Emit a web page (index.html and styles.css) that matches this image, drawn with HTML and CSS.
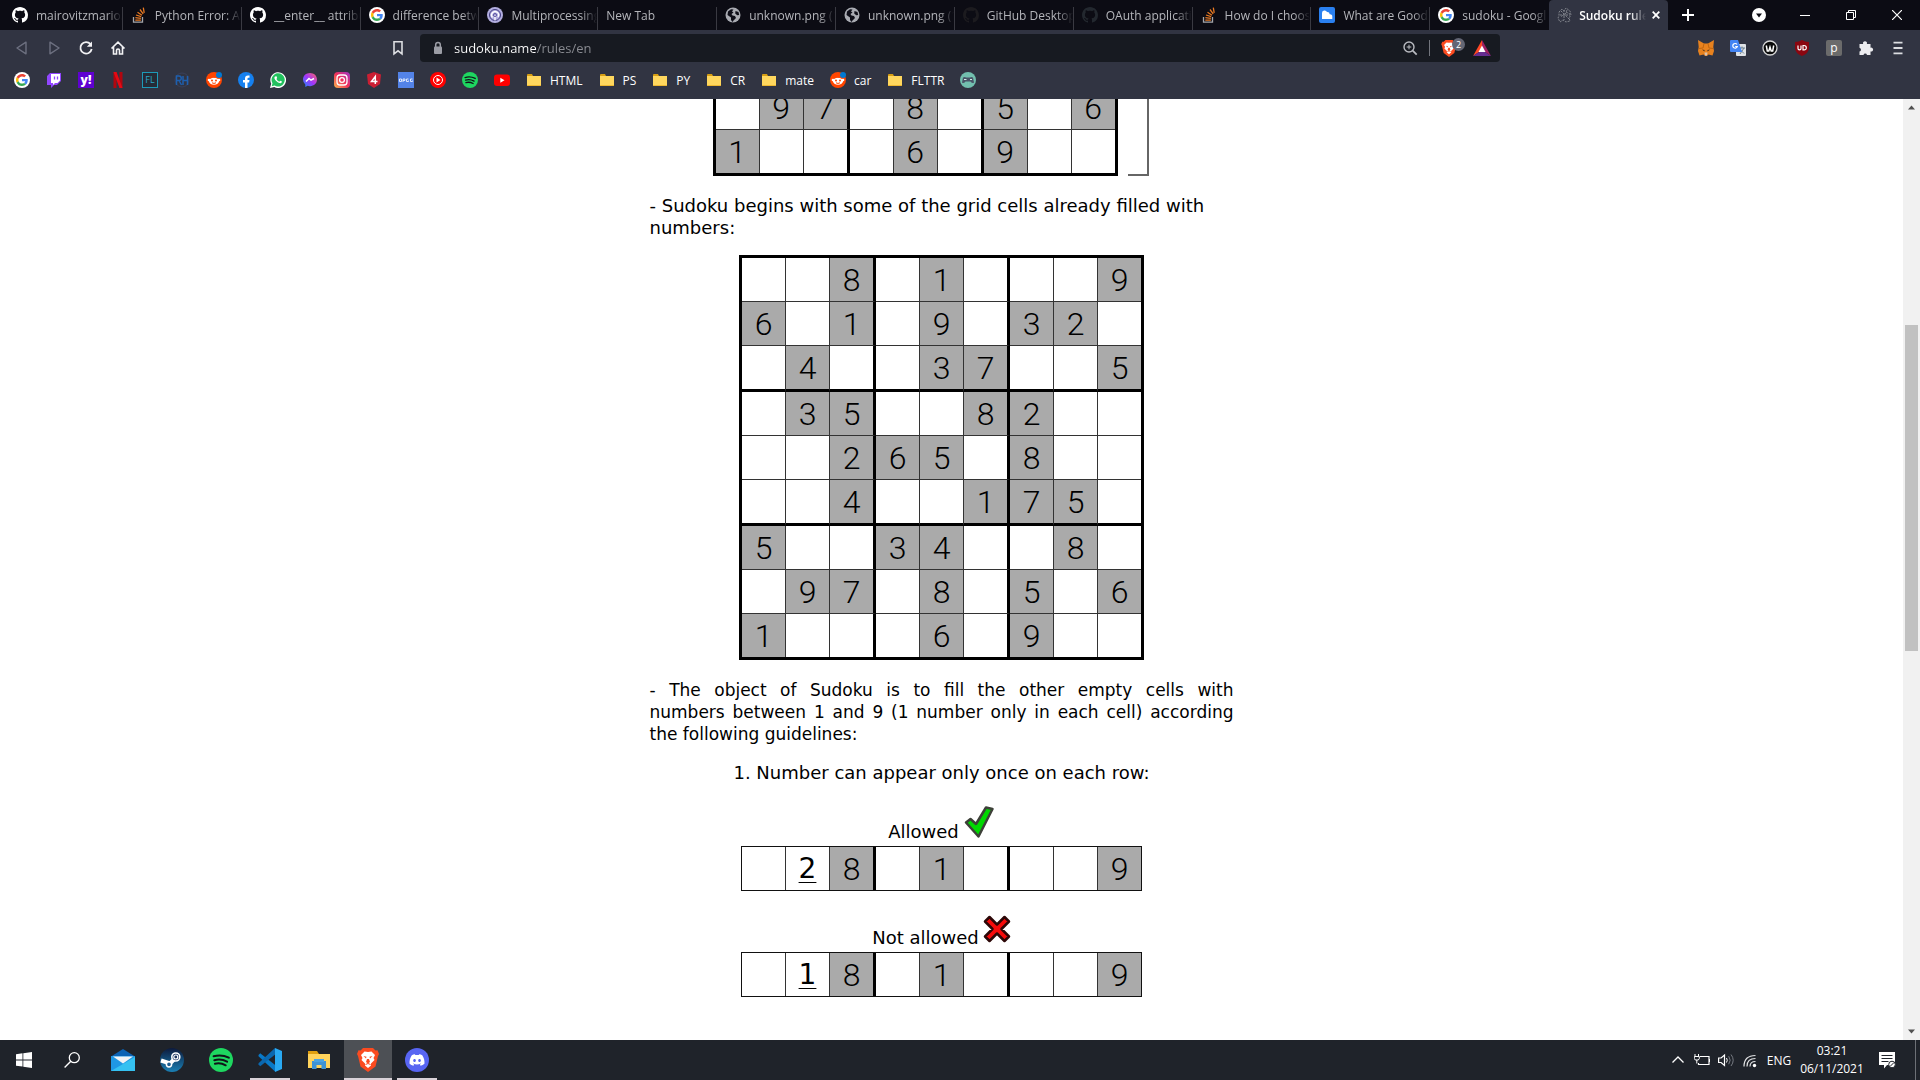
FILE: index.html
```html
<!DOCTYPE html>
<html lang="en">
<head>
<meta charset="utf-8">
<title>Sudoku rules</title>
<link rel="stylesheet" href="styles.css">
</head>
<body>
<svg class="defs" aria-hidden="true">
  <symbol id="github" viewBox="0 0 16 16"><path fill="currentColor" d="M8 0C3.58 0 0 3.58 0 8c0 3.54 2.29 6.53 5.47 7.59.4.07.55-.17.55-.38 0-.19-.01-.82-.01-1.49-2.01.37-2.53-.49-2.69-.94-.09-.23-.48-.94-.82-1.13-.28-.15-.68-.52-.01-.53.63-.01 1.08.58 1.23.82.72 1.21 1.87.87 2.33.66.07-.52.28-.87.51-1.07-1.78-.2-3.64-.89-3.64-3.95 0-.87.31-1.59.82-2.15-.08-.2-.36-1.02.08-2.12 0 0 .67-.21 2.2.82.64-.18 1.32-.27 2-.27.68 0 1.36.09 2 .27 1.53-1.04 2.2-.82 2.2-.82.44 1.1.16 1.92.08 2.12.51.56.82 1.27.82 2.15 0 3.07-1.87 3.75-3.65 3.95.29.25.54.73.54 1.48 0 1.07-.01 1.93-.01 2.2 0 .21.15.46.55.38A8.013 8.013 0 0016 8c0-4.42-3.58-8-8-8z"/></symbol>
  <symbol id="overflow" viewBox="0 0 16 16"><path d="M2.5 10v5.2h9V10" fill="none" stroke="#a5a7ab" stroke-width="1.3"/><path d="M4.3 13.2h5.6M4.4 10.7l5.5.6M5 8l5.200 1.600M6.500 5.200l4.500 3M9 2.500l3.200 4.300M12.300.6l.9 5.200" stroke="#e87922" stroke-width="1.3"/></symbol>
  <symbol id="google" viewBox="0 0 16 16"><circle cx="8" cy="8" r="8" fill="#fff"/><g transform="translate(2 2) scale(.25)"><path fill="#EA4335" d="M24 9.500c3.540 0 6.710 1.220 9.210 3.600l6.850-6.850C35.900 2.380 30.470 0 24 0 14.620 0 6.510 5.380 2.560 13.220l7.980 6.190C12.430 13.720 17.740 9.500 24 9.500z"/><path fill="#4285F4" d="M46.980 24.550c0-1.570-.15-3.090-.38-4.550H24v9.020h12.940c-.58 2.960-2.260 5.480-4.780 7.180l7.730 6c4.510-4.180 7.090-10.360 7.090-17.650z"/><path fill="#FBBC05" d="M10.530 28.590c-.48-1.450-.76-2.990-.76-4.590s.27-3.140.76-4.590l-7.980-6.190C.92 16.460 0 20.120 0 24c0 3.880.92 7.540 2.560 10.780l7.970-6.190z"/><path fill="#34A853" d="M24 48c6.480 0 11.930-2.130 15.890-5.810l-7.730-6c-2.150 1.450-4.920 2.300-8.160 2.300-6.260 0-11.570-4.220-13.470-9.910l-7.980 6.190C6.510 42.620 14.620 48 24 48z"/></g></symbol>
  <symbol id="spiral" viewBox="0 0 16 16"><circle cx="8" cy="8" r="8" fill="#b3aee0"/><circle cx="8" cy="8" r="5.500" fill="none" stroke="#3f3a80" stroke-width="1"/><path d="M5.500 10.500A3.500 3.500 0 1 1 11 10M8 13.500V8" fill="none" stroke="#fff" stroke-width="1.300"/><circle cx="8" cy="8" r="1.500" fill="none" stroke="#5b55a0"/></symbol>
  <symbol id="globe" viewBox="0 0 16 16"><circle cx="8" cy="8" r="7.500" fill="#a9abb2"/><path d="M3 4.500 6 2.200l2.500.3L7 4.500l1.500 1-2 1.500 1 1.500 2.500.5L11 11l-2.500 2.500L7.500 15 6 13V10.500L2.500 8zM10.500 4l3 1 .7 3-2 .2-2-1.700z" fill="#0e0e18"/></symbol>
  <symbol id="cloud" viewBox="0 0 16 16"><rect width="16" height="16" rx="2" fill="#2a80f0"/><path d="M3 12V6a2.600 2.600 0 0 1 5-1 2.500 2.500 0 0 1 2.700 2.300A2.500 2.500 0 0 1 13.300 10v2z" fill="#fff"/></symbol>
  <symbol id="brain" viewBox="0 0 16 16"><path d="M2 5l3-3 2 2 2-3 4 3 1 4-2 3 1 3-4 1-3-2-3 2-2-4 1-2zM4 4l3 3-3 3M7 3v10M10 3L8 8l4 4M3 8h10M9 5l4 2" fill="none" stroke="#80838b" stroke-width="1" stroke-dasharray="2 1"/></symbol>
  <symbol id="folder" viewBox="0 0 16 16"><path d="M1 3q0-1 1-1h4l1 2H1z" fill="#d79e13"/><path d="M1 4h14v9q0 1-1 1H2q-1 0-1-1z" fill="#ffd75e"/><path d="M1 13h14q0 1-1 1H2q-1 0-1-1z" fill="#efb830"/></symbol>
  <symbol id="reddit" viewBox="0 0 16 16"><circle cx="8" cy="8" r="8" fill="#ff4500"/><ellipse cx="8" cy="9.300" rx="5" ry="3.500" fill="#fff"/><circle cx="3" cy="8" r="1.300" fill="#fff"/><circle cx="13" cy="8" r="1.300" fill="#fff"/><circle cx="6" cy="8.600" r="1" fill="#ff4500"/><circle cx="10" cy="8.600" r="1" fill="#ff4500"/><path d="M6 10.800q2 1.300 4 0M8 6l.7-3" stroke="#ff4500" fill="none"/><circle cx="13" cy="3" r="3" fill="#0079d3"/></symbol>
  <symbol id="spotify" viewBox="0 0 24 24"><circle cx="12" cy="12" r="12" fill="#1ed760"/><path d="M4.600 8.300Q12.500 6 19.800 9.700M5.300 12.200q6.700-2 12.800 1.500M5.900 15.800q5.600-1.400 10.800 1.500" fill="none" stroke="#101418" stroke-width="2" stroke-linecap="round"/></symbol>
  <symbol id="brave" viewBox="0 0 22 24"><path d="M6 0h10l2.500 2.500 2-.2L22 6l-1 2-2.500 10.500L11 24l-7.500-5.500L1 8 0 6l1.500-3.700 2 .2z" fill="#fb4b20"/><path d="M11 4 7.500 3.500 4 7l1.500 3-1 2 3.500 3.500v2L11 20l3-2.500v-2l3.500-3.500-1-2L18 7l-3.500-3.500z" fill="#fff"/><path d="M6.500 8l3 .8-.5 1.700zM15.500 8l-3 .8.500 1.700zM10 11l-1 3 2 1.500 2-1.500-1-3z" fill="#fb4b20"/><path d="M8.500 16.500 11 15.500l2.500 1" stroke="#fb4b20" fill="none"/></symbol>
</svg>

<header class="chrome">
  <div class="tabstrip">
    <div class="tabs" role="tablist">
      <button class="tab" role="tab"><svg class="ico white"><use href="#github"/></svg><span>mairovitzmario/</span></button>
      <button class="tab" role="tab"><svg class="ico"><use href="#overflow"/></svg><span>Python Error: At</span></button>
      <button class="tab" role="tab"><svg class="ico white"><use href="#github"/></svg><span>__enter__ attribu</span></button>
      <button class="tab" role="tab"><svg class="ico"><use href="#google"/></svg><span>difference betwe</span></button>
      <button class="tab" role="tab"><svg class="ico"><use href="#spiral"/></svg><span>Multiprocessing</span></button>
      <button class="tab" role="tab"><span>New Tab</span></button>
      <button class="tab" role="tab"><svg class="ico"><use href="#globe"/></svg><span>unknown.png (1</span></button>
      <button class="tab" role="tab"><svg class="ico"><use href="#globe"/></svg><span>unknown.png (1</span></button>
      <button class="tab" role="tab"><svg class="ico dim"><use href="#github"/></svg><span>GitHub Desktop</span></button>
      <button class="tab" role="tab"><svg class="ico dim2"><use href="#github"/></svg><span>OAuth applicati</span></button>
      <button class="tab" role="tab"><svg class="ico"><use href="#overflow"/></svg><span>How do I choos</span></button>
      <button class="tab" role="tab"><svg class="ico"><use href="#cloud"/></svg><span>What are Good</span></button>
      <button class="tab" role="tab"><svg class="ico"><use href="#google"/></svg><span>sudoku - Googl</span></button>
      <button class="tab active" role="tab" aria-selected="true"><svg class="ico"><use href="#brain"/></svg><span>Sudoku rules</span><svg class="close" viewBox="0 0 8 8"><path d="M.7.7l6.600 6.600M7.300.7L.7 7.300" stroke="#fff" stroke-width="1.800"/></svg></button>
    </div>
    <button class="newtab" aria-label="New tab"><svg viewBox="0 0 12 12" width="12" height="12"><path d="M6 0v12M0 6h12" stroke="#fff" stroke-width="2"/></svg></button>
    <div class="wincontrols">
      <button aria-label="Search tabs"><svg viewBox="0 0 14 14" width="14" height="14"><circle cx="7" cy="7" r="7" fill="#fff"/><path d="M4 5.500h6L7 9.500z" fill="#0c0c14"/></svg></button>
      <button aria-label="Minimize"><svg viewBox="0 0 10 10" width="10" height="10"><path d="M0 5.500h10" stroke="#fff"/></svg></button>
      <button aria-label="Restore"><svg viewBox="0 0 10 10" width="10" height="10"><path d="M.5 2.500h7v7h-7zM2.500 2.500v-2h7v7h-2" stroke="#fff" fill="none"/></svg></button>
      <button aria-label="Close"><svg viewBox="0 0 10 10" width="10" height="10"><path d="M0 0l10 10M10 0L0 10" stroke="#fff" stroke-width="1.200"/></svg></button>
    </div>
  </div>

  <nav class="toolbar">
    <div class="navleft">
      <button aria-label="Back"><svg class="ico"><path d="M12 2.200v11.600L3 8z" fill="none" stroke="#6d7080" stroke-width="1.400" stroke-linejoin="round"/></svg></button>
      <button aria-label="Forward"><svg class="ico"><path d="M4 2.200v11.600L13 8z" fill="none" stroke="#6d7080" stroke-width="1.400" stroke-linejoin="round"/></svg></button>
      <button aria-label="Reload"><svg class="ico"><path d="M12.500 4.200A5.700 5.700 0 1 0 13.700 9" fill="none" stroke="#f2f2f4" stroke-width="1.800"/><path d="M14 1.500v5.300H8.800z" fill="#f2f2f4"/></svg></button>
      <button aria-label="Home"><svg class="ico"><path d="M1.500 8.500 8 2.200l6.500 6.300M3.500 7v7h3v-3.500a1.500 1.500 0 0 1 3 0V14h3V7" fill="none" stroke="#f2f2f4" stroke-width="1.600"/></svg></button>
      <button class="mark" aria-label="Bookmark this page"><svg class="ico"><path d="M4 1.800h8v12L8 10.800l-4 3z" fill="none" stroke="#dddee2" stroke-width="1.600"/></svg></button>
    </div>
    <div class="omnibox">
      <svg class="ico"><rect x="4" y="6.500" width="8" height="7.500" rx="1" fill="#9b9da5"/><path d="M5.700 7V4.800a2.300 2.300 0 0 1 4.600 0V7" fill="none" stroke="#9b9da5" stroke-width="1.500"/></svg>
      <input class="url" type="text" aria-label="Address" value="sudoku.name/rules/en">
      <button aria-label="Zoom"><svg class="ico"><circle cx="7" cy="7" r="5" fill="none" stroke="#b9bbc1" stroke-width="1.400"/><path d="M10.700 10.700l4 4" stroke="#b9bbc1" stroke-width="1.800"/><path d="M7 4.700v4.600M4.700 7h4.600" stroke="#b9bbc1"/></svg></button>
      <span class="divider"></span>
      <button class="shield" aria-label="Brave Shields"><svg width="16" height="17"><use href="#brave"/></svg><span class="count">2</span></button>
      <button aria-label="Rewards"><svg width="18" height="16" viewBox="0 0 18 16"><path d="M9 0 0 16 9 10z" fill="#ff4724"/><path d="M9 0l9 16-9-6z" fill="#9e1f63"/><path d="M0 16h18l-9-6z" fill="#662d91"/><path d="M9 5.500 12.500 12h-7z" fill="#fff"/></svg></button>
    </div>
    <div class="extensions">
      <button aria-label="MetaMask"><svg class="ico"><path d="M0 0l6 3.500h4L16 0l-.7 7 .7 4-1.500 4.500-4-1L9 16H7l-1.500-1.500-4 1L0 11l.7-4z" fill="#e8821e"/><path d="M6 3.500 5 8 1 8.500M10 3.500 11 8l4 .5" fill="none" stroke="#c0660f"/><path d="M4 9.500l2.500.5v1.500zM12 9.500 9.500 10v1.500z" fill="#3a2a20"/><path d="M6.500 12.500h3L9 15.500H7z" fill="#d9c3b0"/></svg></button>
      <button aria-label="Translate"><svg class="ico"><rect x="6" y="4" width="10" height="12" rx="1" fill="#dfe2e6"/><path d="M9 8h6M12 6.500V8M10 14l4-6M10 9.500l4 4" stroke="#6b7f8c" fill="none"/><path d="M1 0h7l4 12H1q-1 0-1-1V1q0-1 1-1z" fill="#4384f3"/><path d="M7 4.500A2.300 2.300 0 1 0 7.300 6.500H5.200" fill="none" stroke="#fff" stroke-width="1.200"/></svg></button>
      <button aria-label="W extension"><svg class="ico"><circle cx="8" cy="8" r="7" fill="#0a0a0a" stroke="#d6d6d6" stroke-width="1.300"/><path d="M4.300 5.500l1 5.500h1.500L8 7l1.200 4h1.500l1-5.500" fill="none" stroke="#fff" stroke-width="1.500"/></svg></button>
      <button aria-label="uBlock Origin"><svg class="ico"><path d="M8 0q3 2 7 2v6q0 5-7 8Q1 13 1 8V2q4 0 7-2z" fill="#8a0610"/><path d="M4 5.500v3q0 1.300 1.500 1.300T7 8.500v-3" fill="none" stroke="#fff" stroke-width="1.200"/><path d="M9 5.500h1q2.300 0 2.300 2.200T10 9.800H9z" fill="none" stroke="#fff" stroke-width="1.200"/></svg></button>
      <button aria-label="p extension"><span class="badge pext">p</span></button>
      <button aria-label="Extensions"><svg class="ico"><path d="M1.500 4h3.700a2 2 0 1 1 3.600 0H12.500v3.700a2 2 0 1 1 0 3.800V15H9a1.800 1.800 0 0 0-3.500 0h-4v-3.500a1.900 1.900 0 0 0 0-3.700z" fill="#ededf0"/></svg></button>
      <button aria-label="Menu"><svg class="ico"><path d="M3.500 2.700h9M3.500 8h9M3.500 13.300h9" stroke="#dcdde1" stroke-width="1.800"/></svg></button>
    </div>
  </nav>

  <nav class="bookmarks" aria-label="Bookmarks">
    <a href="#" aria-label="Google"><svg class="ico"><use href="#google"/></svg></a>
    <a href="#" aria-label="Twitch"><svg class="ico"><path d="M4 1h11v8l-4 4H8l-3 3v-3H1V4z" fill="#9146ff"/><path d="M5 2h9v6.500L11.500 11H9l-2 2v-2H5z" fill="#fff"/><path d="M8.500 4.500v3M11.500 4.500v3" stroke="#9146ff" stroke-width="1.300"/></svg></a>
    <a href="#" aria-label="Yahoo"><span class="badge yahoo">y!</span></a>
    <a href="#" aria-label="Netflix"><svg class="ico"><path d="M5 0v16M11 0v16" stroke="#b1060f" stroke-width="3"/><path d="M3.500 0h3l6 16h-3z" fill="#e50914"/></svg></a>
    <a href="#" aria-label="FL"><span class="badge fl">FL</span></a>
    <a href="#" aria-label="RI"><svg class="ico"><circle cx="8" cy="8" r="7" fill="none" stroke="#39405a"/><path d="M2.500 13V4h2.500a2 2 0 0 1 0 4.500H3M5 8.500 7.500 13M9 4v9M9 8.500h4M13.500 4v9" fill="none" stroke="#1e5fae" stroke-width="1.500"/></svg></a>
    <a href="#" aria-label="Reddit"><svg class="ico"><use href="#reddit"/></svg></a>
    <a href="#" aria-label="Facebook"><svg class="ico"><circle cx="8" cy="8" r="8" fill="#1580ef"/><path d="M7 16v-5.500H5V8h2V6.500Q7 3.500 10 3.500h1.500v2.200h-1.200Q9.500 5.700 9.500 6.700V8h2l-.4 2.500H9.500V16z" fill="#fff"/></svg></a>
    <a href="#" aria-label="WhatsApp"><svg class="ico"><path d="M0 16l1.200-4.200A7.900 7.900 0 1 1 4.300 15z" fill="#fff"/><path d="M1.700 14.300l.8-3A6.600 6.600 0 1 1 4.700 13.500z" fill="#22c15e"/><path d="M5 4.500q-1.500 1.500.7 4t5 2.700q1.300-.3 1.300-1.700l-1.800-.8-.9 1Q7.500 9 6.400 7l.8-.9-.7-1.800z" fill="#fff"/></svg></a>
    <a href="#" aria-label="Messenger"><svg class="ico"><defs><linearGradient id="mg" x1="0" y1="1" x2="1" y2="0"><stop offset="0" stop-color="#1b8cff"/><stop offset=".5" stop-color="#a334fa"/><stop offset="1" stop-color="#ff6968"/></linearGradient></defs><path d="M8 1C4 1 1 3.800 1 7.600q0 3 2.300 4.900V15l2.300-1.200A8 8 0 0 0 8 14.200c4 0 7-2.800 7-6.600S12 1 8 1z" fill="url(#mg)"/><path d="M4 9.500 7 6.500l2 1.700 3-1.700" fill="none" stroke="#fff" stroke-width="1.500"/></svg></a>
    <a href="#" aria-label="Instagram"><svg class="ico"><defs><linearGradient id="ig" x1="0" y1="1" x2="1" y2="0"><stop offset="0" stop-color="#fdb94d"/><stop offset=".5" stop-color="#f0305a"/><stop offset="1" stop-color="#9b36c8"/></linearGradient></defs><rect width="16" height="16" rx="4" fill="url(#ig)"/><rect x="3" y="3" width="10" height="10" rx="3" fill="none" stroke="#fff" stroke-width="1.300"/><circle cx="8" cy="8" r="2.400" fill="none" stroke="#fff" stroke-width="1.300"/></svg></a>
    <a href="#" aria-label="4"><svg class="ico"><path d="M8 0l7 2.500-1 9.500-6 4-6-4L1 2.500z" fill="#cb1f33"/><path d="M9.300 12V4.500L5.500 9.500h6" fill="none" stroke="#fff" stroke-width="1.500"/></svg></a>
    <a href="#" aria-label="OP.GG"><svg class="ico"><rect width="16" height="16" fill="#5383e8"/><path d="M1.500 7h2v2.500h-2zM5 10V7h2v1.500H5M10.500 7h-2v2.500h2V8.500M14.500 7h-2v2.500h2V8.500" fill="none" stroke="#dce6fb"/></svg></a>
    <a href="#" aria-label="YouTube Music"><svg class="ico"><circle cx="8" cy="8" r="8" fill="#f00"/><circle cx="8" cy="8" r="4.500" fill="none" stroke="#fff"/><path d="M6.500 5.500 10.500 8l-4 2.500z" fill="#fff"/></svg></a>
    <a href="#" aria-label="Spotify"><svg class="ico"><use href="#spotify"/></svg></a>
    <a href="#" aria-label="YouTube"><svg class="ico"><rect y="2.500" width="16" height="11.500" rx="3" fill="#f00"/><path d="M6.300 5.700 10.500 8.200l-4.200 2.500z" fill="#fff"/></svg></a>
    <a href="#"><svg class="ico"><use href="#folder"/></svg>HTML</a>
    <a href="#"><svg class="ico"><use href="#folder"/></svg>PS</a>
    <a href="#"><svg class="ico"><use href="#folder"/></svg>PY</a>
    <a href="#"><svg class="ico"><use href="#folder"/></svg>CR</a>
    <a href="#"><svg class="ico"><use href="#folder"/></svg>mate</a>
    <a href="#"><svg class="ico"><use href="#reddit"/></svg>car</a>
    <a href="#"><svg class="ico"><use href="#folder"/></svg>FLTTR</a>
    <a href="#" aria-label="Games"><svg class="ico"><circle cx="8" cy="8" r="8" fill="#72bfae"/><path d="M3 5.500q2-1 3 0h4q1-1 3 0l1 5q-1.500 1.500-3.500-1h-5q-2 2.500-3.500 1z" fill="#4a5568"/><path d="M4 7.500h2.500M10 7.500h2" stroke="#cfe9e3"/></svg></a>
  </nav>
</header>

<div class="viewport">
  <main class="page">
    <div class="rules">
      <div class="peek">
        <table class="sudoku cut">
          <tr><td></td><td class="g">9</td><td class="g">7</td><td></td><td class="g">8</td><td></td><td class="g">5</td><td></td><td class="g">6</td></tr>
          <tr><td class="g">1</td><td></td><td></td><td></td><td class="g">6</td><td></td><td class="g">9</td><td></td><td></td></tr>
        </table>
        <div class="bracket"></div>
      </div>
      <p>- Sudoku begins with some of the grid cells already filled with numbers:</p>
      <table class="sudoku">
        <tr><td></td><td></td><td class="g">8</td><td></td><td class="g">1</td><td></td><td></td><td></td><td class="g">9</td></tr>
        <tr><td class="g">6</td><td></td><td class="g">1</td><td></td><td class="g">9</td><td></td><td class="g">3</td><td class="g">2</td><td></td></tr>
        <tr><td></td><td class="g">4</td><td></td><td></td><td class="g">3</td><td class="g">7</td><td></td><td></td><td class="g">5</td></tr>
        <tr><td></td><td class="g">3</td><td class="g">5</td><td></td><td></td><td class="g">8</td><td class="g">2</td><td></td><td></td></tr>
        <tr><td></td><td></td><td class="g">2</td><td class="g">6</td><td class="g">5</td><td></td><td class="g">8</td><td></td><td></td></tr>
        <tr><td></td><td></td><td class="g">4</td><td></td><td></td><td class="g">1</td><td class="g">7</td><td class="g">5</td><td></td></tr>
        <tr><td class="g">5</td><td></td><td></td><td class="g">3</td><td class="g">4</td><td></td><td></td><td class="g">8</td><td></td></tr>
        <tr><td></td><td class="g">9</td><td class="g">7</td><td></td><td class="g">8</td><td></td><td class="g">5</td><td></td><td class="g">6</td></tr>
        <tr><td class="g">1</td><td></td><td></td><td></td><td class="g">6</td><td></td><td class="g">9</td><td></td><td></td></tr>
      </table>
      <p class="justify">- The object of Sudoku is to fill the other empty cells with numbers&nbsp;between 1 and 9 (1 number only in each cell) according the&nbsp;following guidelines:</p>
      <p class="center">1. Number can appear only once on each row:</p>
      <div class="verdict">Allowed
        <svg width="32" height="34" viewBox="0 0 32 34"><path d="M3 16.500 7.500 13l5.500 5L23 1.500l6.500 1.500L15.500 30.500z" fill="#00d800" stroke="#3d4038" stroke-width="2.500" stroke-linejoin="round"/></svg>
      </div>
      <table class="sudoku row">
        <tr><td></td><td class="try">2</td><td class="g">8</td><td></td><td class="g">1</td><td></td><td></td><td></td><td class="g">9</td></tr>
      </table>
      <div class="verdict second">Not allowed
        <svg width="28" height="31" viewBox="0 0 28 31"><path d="M2 6.500 6.500 2l7.500 7.500L21.500 2 26 6.500 18.500 14l7.500 7.500-4.500 4.500-7.500-7.500L6.500 26 2 21.500 9.500 14z" fill="#f60b0b" stroke="#2c0707" stroke-width="2.500" stroke-linejoin="round"/></svg>
      </div>
      <table class="sudoku row">
        <tr><td></td><td class="try">1</td><td class="g">8</td><td></td><td class="g">1</td><td></td><td></td><td></td><td class="g">9</td></tr>
      </table>
    </div>
  </main>
  <div class="scrollbar" aria-hidden="true">
    <svg width="17" height="17" viewBox="0 0 17 17"><path d="M5 10.500h7l-3.500-4z" fill="#505050"/></svg>
    <div class="track"><div class="thumb"></div></div>
    <svg width="17" height="17" viewBox="0 0 17 17"><path d="M5 6.500h7l-3.500 4z" fill="#505050"/></svg>
  </div>
</div>

<footer class="taskbar">
  <div class="apps">
    <button class="sys" aria-label="Start"><svg width="16" height="16" viewBox="0 0 16 16"><path d="M0 2.300 6.500 1.300v6.200H0zM7.300 1.200 16 0v7.500H7.300zM0 8.400h6.500v6.200L0 13.700zM7.300 8.400H16V16l-8.700-1.200z" fill="#fff"/></svg></button>
    <button class="sys" aria-label="Search"><svg width="16" height="16" viewBox="0 0 16 16"><circle cx="10.300" cy="5.700" r="5" fill="none" stroke="#fff" stroke-width="1.300"/><path d="M6.800 9.200.6 15.400" stroke="#fff" stroke-width="1.400"/></svg></button>
    <div class="pinned">
      <button aria-label="Mail"><svg width="24" height="24" viewBox="0 0 24 24"><path d="M0 8.500 12 1l12 7.500z" fill="#0b63b5"/><path d="M0 8h24v15H0z" fill="#1f97e4"/><path d="M24 9v14H0z" fill="#35c1f1"/><path d="M2 8.500h20L12 15.500z" fill="#f1f3f5"/></svg></button>
      <button aria-label="Steam"><svg width="24" height="24" viewBox="0 0 24 24"><defs><linearGradient id="st" x1="0" y1="0" x2="0" y2="1"><stop offset="0" stop-color="#0d1a3c"/><stop offset="1" stop-color="#1a80b5"/></linearGradient></defs><circle cx="12" cy="12" r="12" fill="url(#st)"/><path d="M1 12.500 10 15.500l6-6" fill="none" stroke="#fff" stroke-width="4"/><circle cx="15.800" cy="9" r="4" fill="#1b3560" stroke="#fff" stroke-width="1.600"/><circle cx="15.800" cy="9" r="2" fill="none" stroke="#fff" stroke-width="1.200"/><circle cx="9" cy="16.300" r="2.600" fill="#1b5d90" stroke="#fff" stroke-width="1.500"/></svg></button>
      <button aria-label="Spotify"><svg width="24" height="24"><use href="#spotify"/></svg></button>
      <button class="open" aria-label="Visual Studio Code"><svg width="24" height="24" viewBox="0 0 24 24"><path d="M17.500 17.800 2.200 5.800.5 7.500v1.200L17 24z" fill="#0879c8" transform="translate(0 -.5)"/><path d="M17.500 6.200 2.200 18.200.5 16.500v-1.200L17 0z" fill="#0a68b0"/><path d="M17 0l7 3v18l-7 3z" fill="#29a9f2"/></svg></button>
      <button aria-label="File Explorer"><svg width="24" height="24" viewBox="0 0 24 24"><path d="M1 3h9l2 3H1z" fill="#e0a010"/><path d="M1 6h22v14H1z" fill="#ffd35c"/><path d="M5 21v-8h14v8h-4.500v-4h-5v4z" fill="#3f93d5"/><path d="M7 11h10v3H7z" fill="#4ba3e3"/></svg></button>
      <button class="open current" aria-label="Brave"><svg width="22" height="24"><use href="#brave"/></svg></button>
      <button class="open" aria-label="Discord"><svg width="24" height="24" viewBox="0 0 24 24"><circle cx="12" cy="12" r="12" fill="#5865f2"/><path transform="translate(4.500 4.500) scale(.94)" fill="#fff" d="M13.545 2.907a13.200 13.200 0 0 0-3.257-1.011.05.05 0 0 0-.052.025c-.141.25-.297.577-.406.833a12.200 12.200 0 0 0-3.658 0 8 8 0 0 0-.412-.833.05.05 0 0 0-.052-.025c-1.125.194-2.220.534-3.257 1.011C.356 6.024-.213 9.047.066 12.032a13.300 13.300 0 0 0 4.016 2.057q.51-.69.874-1.407l-1.276-.606.263-.319c2.619 1.196 5.454 1.196 8.145 0l.248.195-1.300.770q.400.780.850 1.370a13.200 13.200 0 0 0 4.030-2.060c.334-3.451-.559-6.449-2.366-9.106m-8.198 7.307c-.789 0-1.438-.724-1.438-1.612s.637-1.613 1.438-1.613c.807 0 1.450.730 1.438 1.613 0 .888-.637 1.612-1.438 1.612m5.316 0c-.788 0-1.438-.724-1.438-1.612s.637-1.613 1.438-1.613c.807 0 1.451.730 1.438 1.613 0 .888-.631 1.612-1.438 1.612"/></svg></button>
    </div>
  </div>
  <div class="tray">
    <button aria-label="Show hidden icons"><svg class="ico"><path d="M2.500 10.500 8 5l5.500 5.500" fill="none" stroke="#fff" stroke-width="1.300"/></svg></button>
    <button aria-label="Battery"><svg class="ico"><path d="M6 4.500h9v8H4.500V11M15.500 7v3" fill="none" stroke="#fff" stroke-width="1.200"/><path d="M1 2v2.500M4.500 2v2.500M.3 4.500h5v2l-1 1.500H1.300l-1-1.500zM2.800 8v3.500" fill="none" stroke="#fff"/></svg></button>
    <button aria-label="Volume"><svg class="ico"><path d="M.6 6h2.500L6.500 3v10.500L3.100 10.500H.6z" fill="none" stroke="#fff" stroke-width="1.200"/><path d="M8.500 6q1.500 2.200 0 4.500" fill="none" stroke="#fff"/><path d="M10.700 4.200q3 4 0 8M13 2.500q4.400 5.700 0 11.500" fill="none" stroke="#777b83"/></svg></button>
    <button aria-label="Network"><svg class="ico"><path d="M2 14.500Q2 3.500 13.500 3.500M5 14.500q0-8 8.500-8M8 14.500q0-5 5.500-5" fill="none" stroke="#e2e3e5" stroke-width="1.200"/><circle cx="12.500" cy="13.500" r="1.700" fill="#fff"/></svg></button>
    <button class="lang">ENG</button>
    <button class="clock"><span>03:21</span><span>06/11/2021</span></button>
    <button class="notes" aria-label="Notifications"><svg width="17" height="17" viewBox="0 0 17 17"><path d="M0 0h16v13H8l-3 3.500V13H0z" fill="#fff"/><path d="M2.500 3.500h11M2.500 6.500h11M2.500 9.500h7" stroke="#1f232a"/><circle cx="13" cy="12.500" r="3.300" fill="#fff" stroke="#1f232a"/><path d="M11 14.500l4-4" stroke="#1f232a"/></svg></button>
    <span class="peekline"></span>
  </div>
</footer>
</body>
</html>
```
FILE: styles.css
```css
* { box-sizing: border-box; }

body {
  margin: 0;
  height: 100vh;
  display: flex;
  flex-direction: column;
  overflow: hidden;
  background: #fff;
  font-family: "Open Sans", sans-serif;
  font-size: 12px;
  color: #fff;
}

button {
  border: 0;
  padding: 0;
  background: none;
  font: inherit;
  color: inherit;
  display: flex;
  align-items: center;
  justify-content: center;
}

svg { display: block; flex: none; }
.defs { position: absolute; width: 0; height: 0; }
.ico { width: 16px; height: 16px; }
.white { color: #fff; }
.dim { color: #1c1b1f; }
.dim2 { color: #23282f; }

/* Tab strip */
.chrome { flex: none; background: #313442; }
.tabstrip { display: flex; height: 30px; background: #0c0c14; }
.tabs {
  display: grid;
  grid-template-columns: repeat(14, minmax(0, 1fr));
  flex: 0 1 1664px;
  min-width: 0;
  margin-left: 4px;
}
.tab {
  min-width: 0;
  justify-content: flex-start;
  gap: 8px;
  padding: 0 1px 0 8px;
  color: #b4b5ba;
  background: linear-gradient(#3a3a42, #3a3a42) right bottom / 1px 23px no-repeat;
}
.tab span {
  flex: 1;
  min-width: 0;
  overflow: hidden;
  white-space: nowrap;
  text-align: left;
  -webkit-mask-image: linear-gradient(90deg, #000 calc(100% - 16px), transparent);
  mask-image: linear-gradient(90deg, #000 calc(100% - 16px), transparent);
}
.tab.active {
  background: #313442;
  border-radius: 4px 4px 0 0;
  color: #fff;
  font-weight: 600;
  gap: 6px;
  padding-right: 8px;
}
.tab:nth-last-child(2) { background: none; }
.close { width: 8px; height: 8px; }
.newtab { width: 40px; }
.wincontrols { display: flex; margin-left: auto; }
.wincontrols button { width: 46px; }

/* Address row */
.toolbar {
  display: grid;
  grid-template-columns: 1fr minmax(0, 1080px) 1fr;
  align-items: center;
  height: 36px;
}
.navleft { display: flex; padding: 0 6px; }
.navleft button, .extensions button { width: 32px; height: 28px; }
.navleft .mark { margin-left: auto; }
.extensions { display: flex; justify-content: flex-end; padding-right: 6px; }
.omnibox {
  display: flex;
  align-items: center;
  gap: 8px;
  height: 28px;
  padding: 0 9px 0 10px;
  border-radius: 4px;
  background: #171a21;
}
.url {
  flex: 1;
  min-width: 0;
  border: 0;
  padding: 0;
  outline: 0;
  font: 13px "Open Sans", sans-serif;
  background: linear-gradient(90deg, #fff 82px, #8b8d93 82px);
  -webkit-background-clip: text;
  background-clip: text;
  color: transparent;
}
.divider { width: 1px; height: 16px; margin: 0 3px; background: #72757d; }
.shield { position: relative; width: 24px; justify-content: flex-start; }
.count {
  position: absolute;
  left: 11px;
  top: -2px;
  width: 13px;
  height: 13px;
  border-radius: 50%;
  background: #636674;
  font-size: 9px;
  line-height: 13px;
  text-align: center;
}
.badge {
  display: block;
  width: 16px;
  height: 16px;
  text-align: center;
  line-height: 16px;
  font-size: 12px;
}
.pext { background: #6b6b6b; border-radius: 2px; }
.yahoo { background: #5f01d1; font-weight: 800; }
.fl { border: 1px solid #1d9ab8; font-size: 9px; line-height: 14px; color: #28a9c8; background: #262b36; }

/* Bookmarks bar */
.bookmarks { display: flex; align-items: center; height: 33px; padding: 0 6px 5px; }
.bookmarks a {
  display: flex;
  align-items: center;
  gap: 8px;
  padding: 0 8px;
  color: #fff;
  text-decoration: none;
}

/* Web page */
.viewport { flex: 1; min-height: 0; display: flex; }
.page {
  flex: 1;
  min-width: 0;
  overflow: hidden;
  padding-right: 20px;
  color: #000;
  font: 18px/22px "DejaVu Sans", sans-serif;
}
.rules {
  display: flex;
  flex-direction: column;
  align-items: center;
  width: 584px;
  max-width: 100%;
  margin: 0 auto;
}
.rules p { width: 100%; margin: 19px 0 16px; }
.rules p.justify { text-align: justify; font-size: 17px; margin-bottom: 17px; }
.rules p.center { text-align: center; margin: 0 0 20px; }
.peek {
  display: flex;
  align-items: flex-end;
  gap: 10px;
  height: 77px;
  padding-right: 22px;
  overflow: hidden;
}
.bracket {
  width: 21px;
  height: 77px;
  border: solid #666;
  border-width: 0 2px 2px 0;
}

.sudoku { border: 3px solid #000; border-spacing: 0; }
.sudoku.cut { border-top: 0; }
.sudoku.row { border-width: 1px; border-color: #111; }
.sudoku td {
  width: 44px;
  height: 44px;
  padding: 0;
  border: solid #333;
  border-width: 0 1px 1px 0;
  text-align: center;
  vertical-align: middle;
  font: 300 32px/42px Roboto, sans-serif;
}
.sudoku td:nth-child(3n) { width: 46px; border-right: 3px solid #000; }
.sudoku td:last-child { width: 43px; border-right: 0; }
.sudoku:not(.cut) tr:nth-child(3n) td { height: 46px; border-bottom: 3px solid #000; }
.sudoku tr:last-child td, .sudoku:not(.cut) tr:last-child td { height: 43px; border-bottom: 0; }
.sudoku .g { background: #aaa; }
.sudoku .try { font: 28px/42px "DejaVu Sans", sans-serif; text-decoration: underline; text-decoration-thickness: 1px; text-underline-offset: 4px; }

.verdict { display: flex; align-items: flex-end; gap: 4px; height: 42px; padding-bottom: 6px; line-height: 16px; }
.verdict.second { height: 61px; }

.scrollbar { width: 17px; display: flex; flex-direction: column; background: #f1f1f1; }
.track { flex: 1; padding: 0 2px; }
.track::before { content: ""; display: block; height: 23%; }
.thumb { height: 36%; background: #c1c1c1; }

/* Taskbar */
.taskbar { flex: none; height: 40px; display: flex; justify-content: space-between; background: #1f232a; }
.apps, .tray, .pinned { display: flex; }
.sys { width: 48px; }
.pinned { gap: 1px; padding-left: 3px; }
.pinned button { width: 48px; }
.open { background: linear-gradient(#d9d2d8, #d9d2d8) center bottom / 40px 2px no-repeat; }
.open.current { background: linear-gradient(#d9d2d8, #d9d2d8) center bottom / 48px 2px no-repeat, #4d5055; }
.tray button { width: 24px; }
.tray .lang { width: 34px; }
.tray .clock { width: 72px; flex-direction: column; line-height: 18px; }
.tray .notes { width: 38px; }
.peekline { width: 5px; margin-left: 9px; border-left: 1px solid #6d7076; }
```
